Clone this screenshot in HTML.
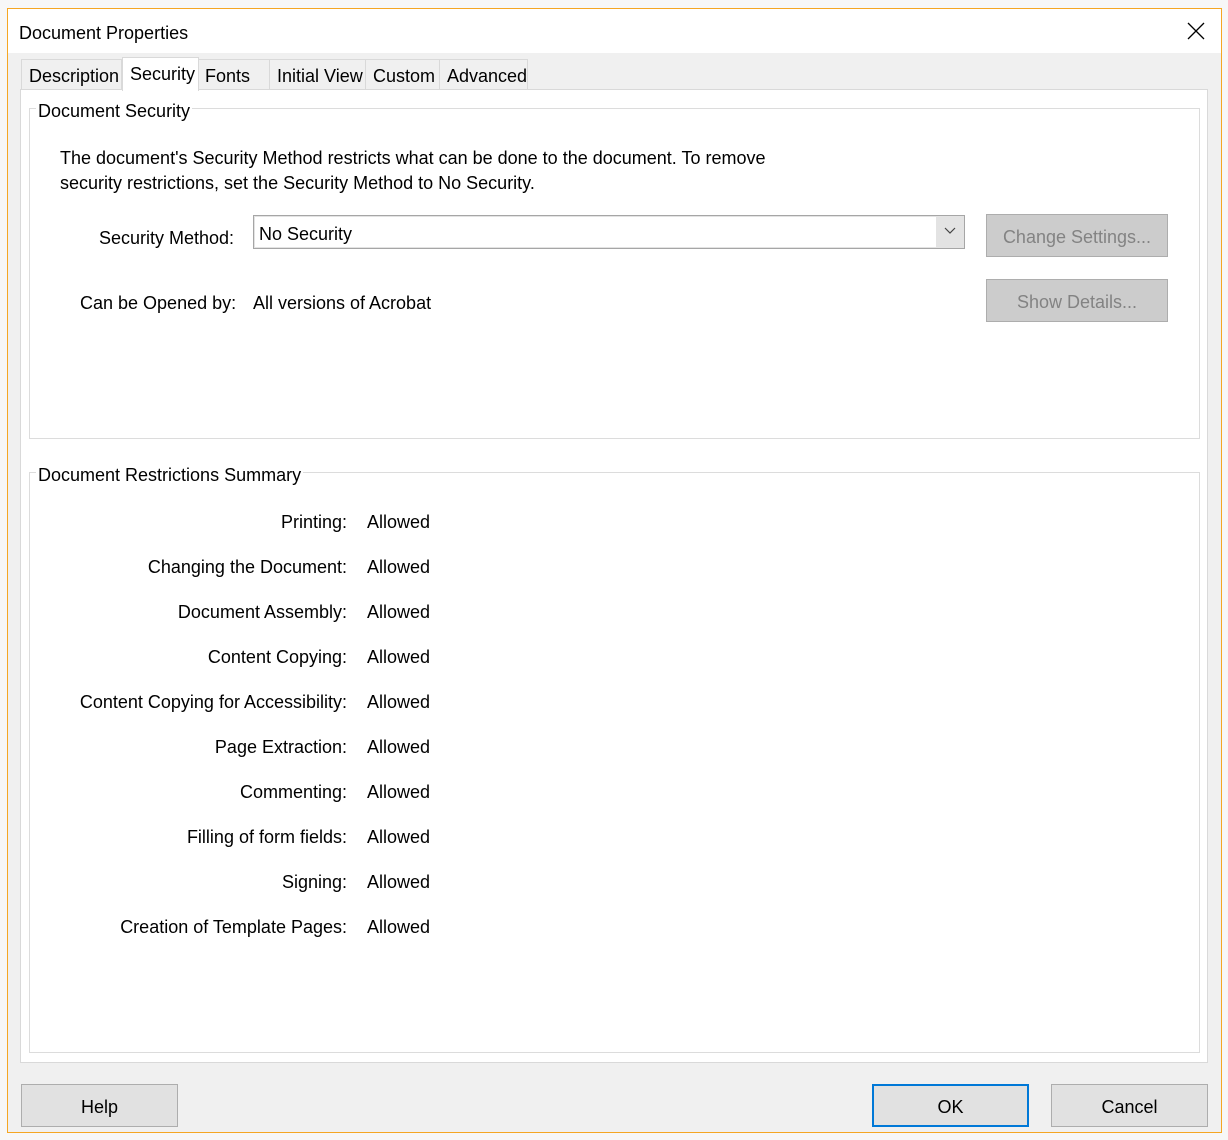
<!DOCTYPE html>
<html><head><meta charset="utf-8"><style>
*{margin:0;padding:0;box-sizing:border-box}
body{width:1228px;height:1140px;background:#f7f7f7;position:relative;overflow:hidden;font-family:"Liberation Sans",sans-serif;font-size:18px;color:#000}
.a{position:absolute;white-space:nowrap;line-height:20px}
.win{position:absolute;left:7px;top:8px;width:1215px;height:1125px;border:1px solid #f5a623;background:#f0f0f0}
.title{position:absolute;left:8px;top:9px;width:1213px;height:44px;background:#fff}
.tab{position:absolute;top:59px;height:31px;background:#f0f0f0;border:1px solid #d9d9d9;border-bottom:none;line-height:32px;padding-left:7px}
.panel{position:absolute;left:20px;top:89px;width:1188px;height:974px;background:#fff;border:1px solid #d9d9d9}
.grp{position:absolute;border:1px solid #dcdcdc}
.lg{position:absolute;background:#fff;padding:0 2px}
.btn{position:absolute;background:#cccccc;border:1px solid #adadad;color:#838383;text-align:center}
.fb{position:absolute;background:#e1e1e1;border:1px solid #adadad;text-align:center;line-height:44px}
.r{position:absolute;right:881px;text-align:right;white-space:nowrap;line-height:20px}
.v{position:absolute;left:367px;white-space:nowrap;line-height:20px}
</style></head><body>
<div class="win"></div>
<div class="title"></div>
<div class="a" style="left:19px;top:23px">Document Properties</div>
<svg style="position:absolute;left:1187px;top:22px" width="18" height="18"><path d="M1 1L17 17M17 1L1 17" stroke="#000" stroke-width="1.3"/></svg>
<div class="tab" style="left:21px;width:101px">Description</div>
<div class="tab" style="left:197px;width:73px">Fonts</div>
<div class="tab" style="left:269px;width:97px">Initial View</div>
<div class="tab" style="left:365px;width:75px">Custom</div>
<div class="tab" style="left:439px;width:89px">Advanced</div>
<div class="panel"></div>
<div class="tab" style="left:122px;top:57px;height:34px;width:77px;background:#fff;line-height:32px;z-index:2">Security</div>

<div class="grp" style="left:29px;top:108px;width:1171px;height:331px"></div>
<div class="a lg" style="left:36px;top:101px">Document Security</div>
<div class="a" style="left:60px;top:148px">The document's Security Method restricts what can be done to the document. To remove</div>
<div class="a" style="left:60px;top:173px">security restrictions, set the Security Method to No Security.</div>
<div class="a" style="left:99px;top:228px">Security Method:</div>
<div style="position:absolute;left:253px;top:215px;width:712px;height:34px;border:1px solid #a6a6a6;background:#e3e3e3">
<div style="position:absolute;left:1px;top:1px;width:681px;height:30px;background:#fff"></div>
<div class="a" style="left:5px;top:8px">No Security</div>
<svg style="position:absolute;left:690px;top:11px" width="12" height="8"><path d="M1 1L6 6L11 1" stroke="#444" fill="none" stroke-width="1.2"/></svg>
</div>
<div class="btn" style="left:986px;top:214px;width:182px;height:43px;line-height:45px">Change Settings...</div>
<div class="a" style="left:80px;top:293px">Can be Opened by:</div>
<div class="a" style="left:253px;top:293px">All versions of Acrobat</div>
<div class="btn" style="left:986px;top:279px;width:182px;height:43px;line-height:45px">Show Details...</div>

<div class="grp" style="left:29px;top:472px;width:1171px;height:581px"></div>
<div class="a lg" style="left:36px;top:465px">Document Restrictions Summary</div>
<div class="r" style="top:512px">Printing:</div><div class="v" style="top:512px">Allowed</div>
<div class="r" style="top:557px">Changing the Document:</div><div class="v" style="top:557px">Allowed</div>
<div class="r" style="top:602px">Document Assembly:</div><div class="v" style="top:602px">Allowed</div>
<div class="r" style="top:647px">Content Copying:</div><div class="v" style="top:647px">Allowed</div>
<div class="r" style="top:692px">Content Copying for Accessibility:</div><div class="v" style="top:692px">Allowed</div>
<div class="r" style="top:737px">Page Extraction:</div><div class="v" style="top:737px">Allowed</div>
<div class="r" style="top:782px">Commenting:</div><div class="v" style="top:782px">Allowed</div>
<div class="r" style="top:827px">Filling of form fields:</div><div class="v" style="top:827px">Allowed</div>
<div class="r" style="top:872px">Signing:</div><div class="v" style="top:872px">Allowed</div>
<div class="r" style="top:917px">Creation of Template Pages:</div><div class="v" style="top:917px">Allowed</div>

<div class="fb" style="left:21px;top:1084px;width:157px;height:43px">Help</div>
<div class="fb" style="left:872px;top:1084px;width:157px;height:43px;border:2px solid #0078d7;line-height:42px">OK</div>
<div class="fb" style="left:1051px;top:1084px;width:157px;height:43px">Cancel</div>
</body></html>
